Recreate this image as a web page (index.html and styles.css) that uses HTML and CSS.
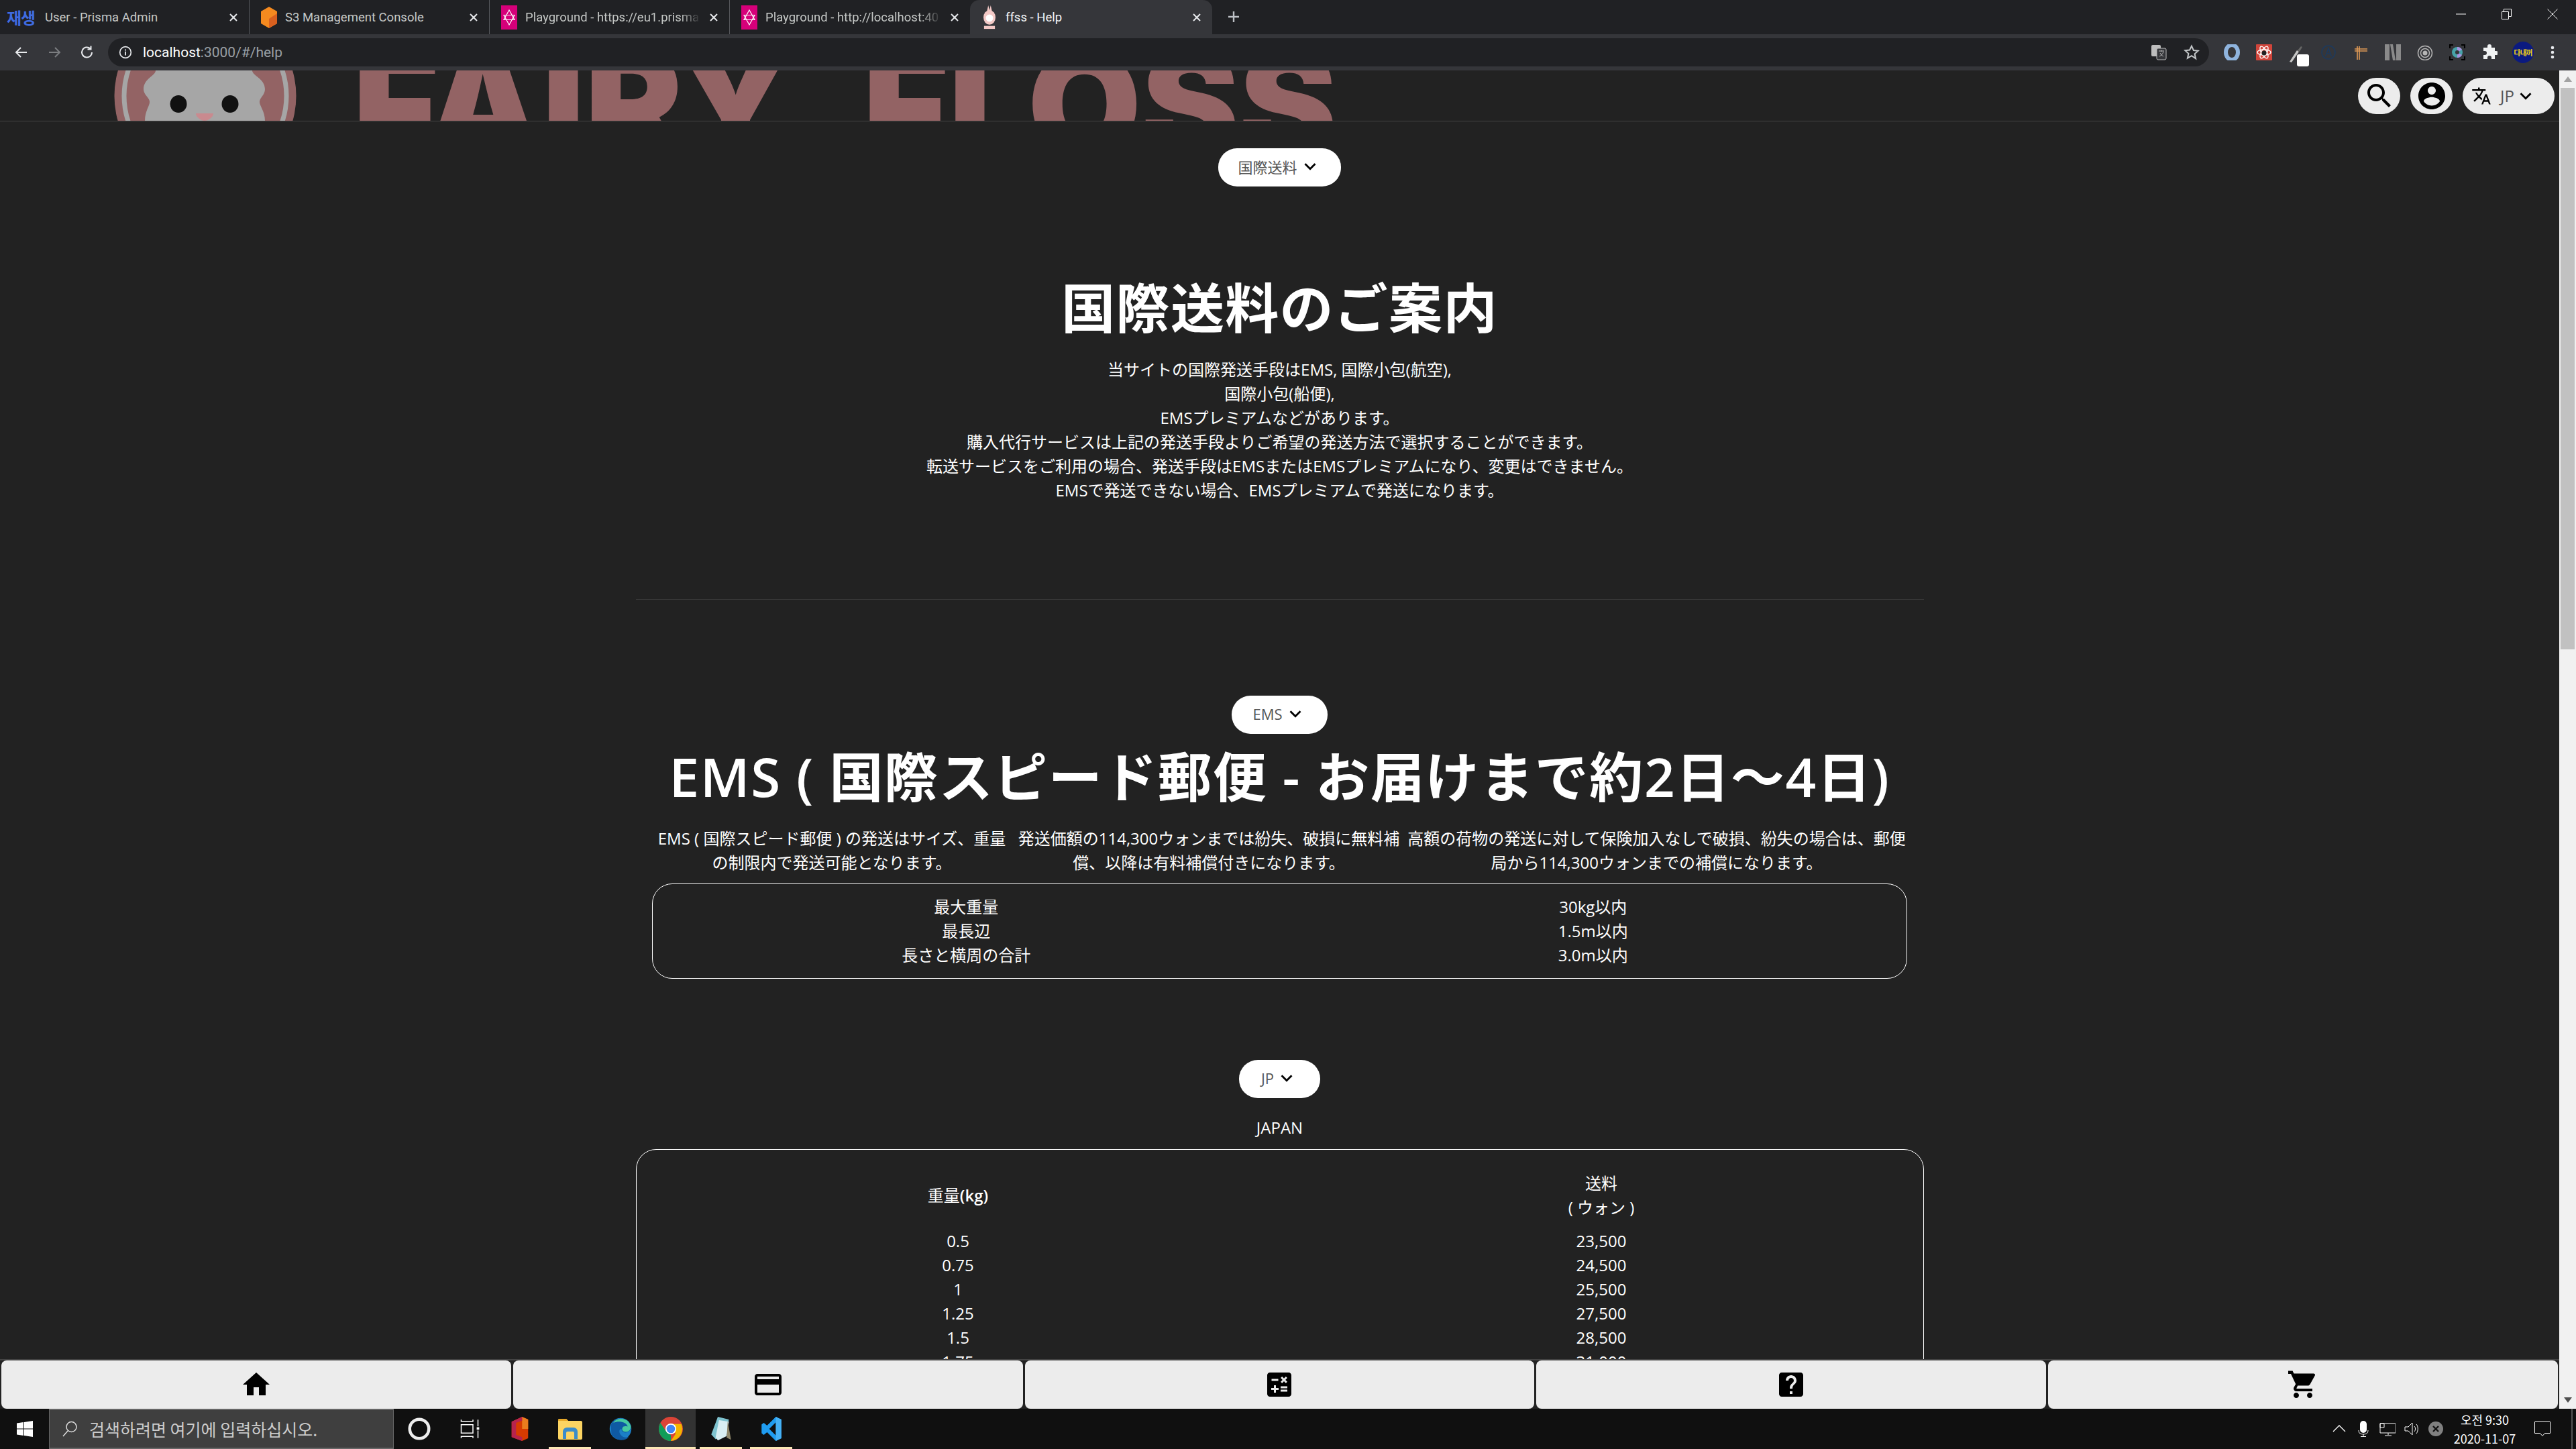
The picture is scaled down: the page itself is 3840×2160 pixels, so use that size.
FILE: index.html
```html
<!DOCTYPE html>
<html lang="ja">
<head>
    <meta charset="UTF-8">
    <title>ffss - Help</title>
    <link rel="stylesheet" href="styles.css">
</head>
<body>
    <svg class="sprites" width="0" height="0">
        <symbol id="chevron" viewBox="0 0 24 24"><path d="M16.59 8.59L12 13.17 7.41 8.59 6 10l6 6 6-6z"/></symbol>
        <symbol id="tab-close" viewBox="0 0 14 14"><path d="M2 2l10 10M12 2L2 12" stroke="#e8eaed" stroke-width="2" fill="none"/></symbol>
        <symbol id="graphql" viewBox="0 0 24 36"><rect width="24" height="36" fill="#d6007a"/><path d="M12 7l8 14.500H4zM12 29L4 14.500h16z" fill="none" stroke="#fff" stroke-width="1.200"/></symbol>
    </svg>

    <div class="tabstrip">
        <div class="tab">
            <span class="favicon-text">재생</span>
            <span class="tab-title">User - Prisma Admin</span>
            <svg class="tab-x"><use href="#tab-close"/></svg>
        </div>
        <div class="tab">
            <svg class="favicon" viewBox="0 0 24 32"><path d="M12 0l12 7v18l-12 7-12-7V7z" fill="#f58a1f"/><path d="M12 32l12-7V10l-12 8z" fill="#d9601f"/></svg>
            <span class="tab-title">S3 Management Console</span>
            <svg class="tab-x"><use href="#tab-close"/></svg>
        </div>
        <div class="tab">
            <svg class="favicon"><use href="#graphql"/></svg>
            <span class="tab-title tab-fade">Playground - https://eu1.prisma</span>
            <svg class="tab-x"><use href="#tab-close"/></svg>
        </div>
        <div class="tab tab-last">
            <svg class="favicon"><use href="#graphql"/></svg>
            <span class="tab-title tab-fade">Playground - http://localhost:40</span>
            <svg class="tab-x"><use href="#tab-close"/></svg>
        </div>
        <div class="tab tab-active">
            <svg class="favicon" viewBox="0 0 24 40"><ellipse cx="12" cy="20" rx="10" ry="12" fill="#f3c9c6"/><path d="M8 9l2-9 2 8 2-8 2 9z" fill="#f3c9c6"/><circle cx="12" cy="21" r="6" fill="#fff"/><rect x="3" y="34" width="18" height="5" fill="#f3c9c6"/></svg>
            <span class="tab-title">ffss - Help</span>
            <svg class="tab-x"><use href="#tab-close"/></svg>
        </div>
        <svg class="new-tab" viewBox="0 0 20 20"><path d="M10 2v16M2 10h16" stroke="#bdc1c6" stroke-width="2.400"/></svg>
        <div class="window-controls">
            <svg viewBox="0 0 16 16"><path d="M0 8h15" stroke="#fff"/></svg>
            <svg viewBox="0 0 16 16"><path d="M.5 4.500h10v11H.5zM3.500 4V.5h11v11H11" fill="none" stroke="#fff"/></svg>
            <svg viewBox="0 0 16 16"><path d="M.5.5l15 15M15.500.5l-15 15" stroke="#fff"/></svg>
        </div>
    </div>

    <div class="toolbar">
        <svg class="nav-arrow" viewBox="0 0 24 24"><path d="M20 12H5M11 5l-7 7 7 7" fill="none" stroke="#e8eaed" stroke-width="2"/></svg>
        <svg class="nav-arrow" viewBox="0 0 24 24"><path d="M4 12h15M13 5l7 7-7 7" fill="none" stroke="#7b7d80" stroke-width="2"/></svg>
        <svg class="nav-arrow" viewBox="0 0 24 24"><path d="M19 12a7.500 7.500 0 1 1-2.400-5.500M17.500 2.500v5h-5" fill="none" stroke="#e8eaed" stroke-width="2"/></svg>
        <div class="omnibox">
            <svg class="omni-info" viewBox="0 0 24 24"><circle cx="12" cy="12" r="10" fill="none" stroke="#e8eaed" stroke-width="2"/><path d="M12 10.500v7M12 6.500v2.400" stroke="#e8eaed" stroke-width="2.200"/></svg>
            <span class="url"><b>localhost</b>:3000/#/help</span>
            <svg class="omni-icon omni-translate" viewBox="0 0 24 24"><rect x="1" y="1" width="14" height="17" rx="2" fill="#bdbdbd"/><rect x="9" y="6" width="14" height="17" rx="2" fill="#35363a" stroke="#bdbdbd"/><path d="M12 10h8M16 9v2M19 11c-1 4-4 6-6 7M14 13c1 2 3 4 5 5" stroke="#bdbdbd" fill="none"/></svg>
            <svg class="omni-icon omni-star" viewBox="0 0 24 24"><path d="M12 2.600l2.900 6.400 6.900.7-5.200 4.600 1.500 6.900L12 17.200l-6.100 3.500 1.500-6.900-5.200-4.600 6.900-.7z" fill="none" stroke="#c4c7c9" stroke-width="2"/></svg>
        </div>
        <div class="extensions">
            <svg viewBox="0 0 24 24"><ellipse cx="12" cy="12" rx="9" ry="11" fill="none" stroke="#8fb4de" stroke-width="6"/></svg>
            <svg viewBox="0 0 24 24"><rect x="0" y="0" width="24" height="24" rx="1" fill="#d0453b"/><g fill="none" stroke="#fff" stroke-width="1.400"><ellipse cx="12" cy="12" rx="10" ry="4"/><ellipse cx="12" cy="12" rx="10" ry="4" transform="rotate(60 12 12)"/><ellipse cx="12" cy="12" rx="10" ry="4" transform="rotate(120 12 12)"/></g><circle cx="12" cy="13" r="3.500" fill="#222"/></svg>
            <div class="ext-knife">
                <svg viewBox="0 0 24 24"><path d="M2 23l3 1L16 8l-3-2z" fill="#c8c8c8"/><path d="M14 6l5-6 2 1-4 7z" fill="#666"/></svg>
                <span class="ext-badge"></span>
            </div>
            <svg viewBox="0 0 24 24"><circle cx="12" cy="12" r="10" fill="none" stroke="#1c3a5e" stroke-width="1.500"/><path d="M7.500 18L12 6l4.500 12M9 14h6" fill="none" stroke="#1c3a5e" stroke-width="1.500"/></svg>
            <svg viewBox="0 0 24 24"><path d="M7 3v20M10 3v20M3 7h19M3 10h19" stroke="#e09a55" stroke-width="1.600" fill="none"/></svg>
            <svg viewBox="0 0 24 24"><path d="M0 0h7v24H0zM8 0h4l4 24h-4zM17 0h7v24h-7z" fill="#8a8a8a"/></svg>
            <svg viewBox="0 0 24 24"><g fill="none" stroke="#b5b5b5" stroke-width="1.500"><circle cx="12" cy="13" r="10.500"/><circle cx="12" cy="13" r="6.500"/></g><circle cx="12" cy="13" r="3.500" fill="#b5b5b5"/></svg>
            <svg viewBox="0 0 24 24"><path d="M1 6V1h5M18 1h5v5M23 18v5h-5M6 23H1v-5" fill="none" stroke="#000" stroke-width="2"/><circle cx="12" cy="12" r="8" fill="#47a3a8"/><path d="M12 12V4a8 8 0 0 1 7 4zM12 12l7 4a8 8 0 0 1-7 4z" fill="#a794e0"/><circle cx="12" cy="12" r="3" fill="#35363a"/></svg>
            <svg viewBox="0 0 24 24"><path d="M9 3a3 3 0 0 1 6 0v2h5v5h2a3 3 0 0 1 0 6h-2v6h-5v-2a3 3 0 0 0-6 0v2H3v-6h2a3 3 0 0 0 0-6H3V5h6z" fill="#f1f3f4"/></svg>
            <div class="ext-avatar"><span>다내꺼</span></div>
            <svg class="ext-dots" viewBox="0 0 24 24"><circle cx="12" cy="5" r="2.300"/><circle cx="12" cy="12" r="2.300"/><circle cx="12" cy="19" r="2.300"/></svg>
        </div>
    </div>

    <div class="viewport">
        <div class="page">
            <header class="site-header">
                <div class="logo">
                    <svg class="logo-mark" viewBox="0 0 272 75">
                        <circle cx="136" cy="38" r="135.500" fill="#936364"/>
                        <circle cx="136" cy="38" r="121" fill="none" stroke="#a6a6a6" stroke-width="7"/>
                        <path d="M62 0C62 8 44 12 44 28C44 36 52 40 53 46C54 52 46 60 46 75H225C225 60 216 52 217 46C218 40 225 36 225 28C225 12 206 8 206 0Z" fill="#a6a6a6"/>
                        <ellipse cx="96" cy="50" rx="12.500" ry="13" fill="#111"/>
                        <ellipse cx="173" cy="50" rx="12.500" ry="13" fill="#111"/>
                        <path d="M122 64H148C148 70 140 75 135 75C130 75 122 70 122 64Z" fill="#c98a8f"/>
                    </svg>
                    <div class="logo-word"><span>FAIRY FLOSS</span></div>
                </div>
                <div class="header-actions">
                    <button class="pill pill-icon"><svg class="icon-48" viewBox="0 0 24 24"><path d="M15.500 14h-.79l-.28-.27C15.410 12.590 16 11.110 16 9.500 16 5.910 13.090 3 9.500 3S3 5.910 3 9.500 5.910 16 9.500 16c1.610 0 3.090-.59 4.230-1.570l.27.28v.79l5 4.990L20.490 19l-4.990-5zm-6 0C7.010 14 5 11.990 5 9.500S7.010 5 9.500 5 14 7.010 14 9.500 11.990 14 9.500 14z"/></svg></button>
                    <button class="pill pill-icon"><svg class="icon-48" viewBox="0 0 24 24"><path d="M12 2C6.480 2 2 6.480 2 12s4.480 10 10 10 10-4.480 10-10S17.520 2 12 2zm0 3c1.660 0 3 1.340 3 3s-1.340 3-3 3-3-1.340-3-3 1.340-3 3-3zm0 14.200c-2.500 0-4.710-1.280-6-3.220.03-1.990 4-3.080 6-3.080 1.990 0 5.970 1.090 6 3.080-1.290 1.940-3.500 3.220-6 3.220z"/></svg></button>
                    <button class="pill pill-lang">
                        <svg class="icon-translate" viewBox="0 0 24 24"><path d="M12.870 15.070l-2.540-2.510.03-.03c1.740-1.940 2.980-4.170 3.710-6.530H17V4h-7V2H8v2H1v1.990h11.170C11.500 7.920 10.440 9.750 9 11.350 8.070 10.320 7.300 9.190 6.690 8h-2c.73 1.630 1.730 3.170 2.980 4.560l-5.090 5.020L4 19l5-5 3.110 3.110.76-2.040zM18.500 10h-2L12 22h2l1.120-3h4.750L21 22h2l-4.500-12zm-2.620 7l1.620-4.330L19.120 17h-3.240z"/></svg>
                        <span>JP</span>
                        <svg class="icon-chevron"><use href="#chevron"/></svg>
                    </button>
                </div>
            </header>

            <main class="content">
                <button class="pill pill-select select-intl">国際送料 <svg class="icon-chevron"><use href="#chevron"/></svg></button>
                <h1 class="page-title">国際送料のご案内</h1>
                <p class="lead">
                    当サイトの国際発送手段はEMS, 国際小包(航空),<br>
                    国際小包(船便),<br>
                    EMSプレミアムなどがあります。<br>
                    購入代行サービスは上記の発送手段よりご希望の発送方法で選択することができます。<br>
                    転送サービスをご利用の場合、発送手段はEMSまたはEMSプレミアムになり、変更はできません。<br>
                    EMSで発送できない場合、EMSプレミアムで発送になります。
                </p>
                <hr class="divider">

                <button class="pill pill-select select-ems">EMS <svg class="icon-chevron"><use href="#chevron"/></svg></button>
                <h2 class="section-title">EMS ( 国際スピード郵便 - お届けまで約2日～4日)</h2>
                <div class="notes">
                    <p>EMS ( 国際スピード郵便 ) の発送はサイズ、重量<br>の制限内で発送可能となります。</p>
                    <p>発送価額の114,300ウォンまでは紛失、破損に無料補<br>償、以降は有料補償付きになります。</p>
                    <p>高額の荷物の発送に対して保険加入なしで破損、紛失の場合は、郵便<br>局から114,300ウォンまでの補償になります。</p>
                </div>
                <table class="box-table box-limits">
                    <tr><td>最大重量</td><td>30kg以内</td></tr>
                    <tr><td>最長辺</td><td>1.5m以内</td></tr>
                    <tr><td>長さと横周の合計</td><td>3.0m以内</td></tr>
                </table>

                <button class="pill pill-select select-country">JP <svg class="icon-chevron"><use href="#chevron"/></svg></button>
                <p class="country">JAPAN</p>
                <table class="box-table box-rates">
                    <tr><th>重量<b>(kg)</b></th><th>送料<br>( ウォン )</th></tr>
                    <tr><td>0.5</td><td>23,500</td></tr>
                    <tr><td>0.75</td><td>24,500</td></tr>
                    <tr><td>1</td><td>25,500</td></tr>
                    <tr><td>1.25</td><td>27,500</td></tr>
                    <tr><td>1.5</td><td>28,500</td></tr>
                    <tr><td>1.75</td><td>31,000</td></tr>
                    <tr><td>2</td><td>33,000</td></tr>
                </table>
            </main>

            <nav class="bottom-nav">
                <button><svg class="icon-48" viewBox="0 0 24 24"><path d="M10 20v-6h4v6h5v-8h3L12 3 2 12h3v8z"/></svg></button>
                <button><svg class="icon-48" viewBox="0 0 24 24"><path d="M20 4H4c-1.110 0-1.990.89-1.990 2L2 18c0 1.110.89 2 2 2h16c1.110 0 2-.89 2-2V6c0-1.110-.89-2-2-2zm0 14H4v-6h16v6zm0-10H4V6h16v2z"/></svg></button>
                <button><svg class="icon-48" viewBox="0 0 24 24"><path d="M19 3H5c-1.100 0-2 .9-2 2v14c0 1.100.9 2 2 2h14c1.100 0 2-.9 2-2V5c0-1.100-.9-2-2-2zm-5.970 4.060L14.090 6l1.410 1.410L16.910 6l1.060 1.060-1.410 1.410 1.410 1.410-1.060 1.060-1.410-1.400-1.410 1.410-1.060-1.060 1.410-1.410-1.410-1.420zm-6.780.66h5v1.500h-5v-1.500zM11.500 16h-2v2H8v-2H6v-1.500h2v-2h1.500v2h2V16zm6.500 1.250h-5v-1.500h5v1.500zm0-2.500h-5v-1.500h5v1.500z"/></svg></button>
                <button><svg class="icon-48" viewBox="0 0 24 24"><path d="M19 3H5c-1.110 0-2 .9-2 2v14c0 1.100.89 2 2 2h14c1.100 0 2-.9 2-2V5c0-1.100-.9-2-2-2zm-6 16h-2v-2h2v2zm2.070-7.750l-.9.92C13.450 12.900 13 13.500 13 15h-2v-.5c0-1.100.45-2.100 1.170-2.830l1.240-1.260c.37-.36.59-.86.59-1.410 0-1.100-.9-2-2-2s-2 .9-2 2H8c0-2.210 1.790-4 4-4s4 1.790 4 4c0 .88-.36 1.680-.93 2.250z"/></svg></button>
                <button><svg class="icon-48" viewBox="0 0 24 24"><path d="M7 18c-1.100 0-1.990.9-1.990 2S5.900 22 7 22s2-.9 2-2-.9-2-2-2zM1 2v2h2l3.600 7.590-1.350 2.450c-.16.28-.25.61-.25.96 0 1.100.9 2 2 2h12v-2H7.420c-.14 0-.25-.11-.25-.25l.03-.12.9-1.830h7.450c.75 0 1.410-.41 1.750-1.030l3.580-6.490c.08-.14.12-.31.12-.48 0-.55-.45-1-1-1H5.210l-.94-2H1zm16 16c-1.100 0-1.990.9-1.990 2s.89 2 1.990 2 2-.9 2-2-.9-2-2-2z"/></svg></button>
            </nav>
        </div>

        <div class="scrollbar">
            <div class="scroll-arrow"><svg viewBox="0 0 12 8"><path d="M6 0l6 8H0z" fill="#a3a3a3"/></svg></div>
            <div class="scroll-thumb"></div>
            <div class="scroll-track"></div>
            <div class="scroll-arrow"><svg viewBox="0 0 12 8"><path d="M0 0h12L6 8z" fill="#505050"/></svg></div>
        </div>
    </div>

    <footer class="taskbar">
        <div class="start"><svg viewBox="0 0 24 24"><path d="M0 3.500l10-1.400v9.400H0zM11 2l13-2v11.500H11zM0 12.500h10v9.400L0 20.500zM11 12.500h13V24l-13-2z" fill="#fff"/></svg></div>
        <div class="task-search">
            <svg viewBox="0 0 24 24"><circle cx="14.500" cy="9" r="7.500" fill="none" stroke="#ddd" stroke-width="1.500"/><path d="M9 15L2 23" stroke="#ddd" stroke-width="1.500"/></svg>
            <span>검색하려면 여기에 입력하십시오.</span>
        </div>
        <div class="task-app"><svg viewBox="0 0 24 24"><circle cx="12" cy="12" r="9.500" fill="none" stroke="#eee" stroke-width="3"/></svg></div>
        <div class="task-app task-view"><svg viewBox="0 0 24 24"><path d="M2 1v2h14V1M2 23v-2h14v2M2 7h14v10H2zM22 1v8M22 14v9" fill="none" stroke="#fff" stroke-width="1.200"/><rect x="20.500" y="10" width="3" height="3" fill="#fff"/></svg></div>
        <div class="task-app"><svg viewBox="0 0 36 44"><path d="M3 9L22 0l11 5v34l-11 5-19-7z" fill="#d83b01"/><path d="M22 0l11 5v17H22z" fill="#eb7d1e"/><path d="M3 9L22 0v7L11 11v22l11 4v7L3 37z" fill="#b7234d"/></svg></div>
        <div class="task-app running"><svg viewBox="0 0 36 32"><path d="M0 3a2 2 0 0 1 2-2h10l3 3h19a2 2 0 0 1 2 2v24a2 2 0 0 1-2 2H2a2 2 0 0 1-2-2z" fill="#fcd462"/><path d="M0 3a2 2 0 0 1 2-2h10l3 3H0z" fill="#e8a929"/><path d="M7 31V20a6 6 0 0 1 6-6h10a6 6 0 0 1 6 6v11h-5v-9a2 2 0 0 0-2-2h-8a2 2 0 0 0-2 2v9z" fill="#3b8cc9"/></svg></div>
        <div class="task-app"><svg viewBox="0 0 36 40"><circle cx="18" cy="20" r="18" fill="#1b7fc8"/><path d="M2 14C6 0 30-2 35 14c2 7-3 12-9 12-5 0-7-3-6-6-6 0-5 9 2 13 4 2 8 1 10 0-6 8-22 8-29-4z" fill="#0f5aa3"/><path d="M6 10C12 0 30 0 35 15c1 5-3 10-8 10-5 0-7-3-6-6 1-5 8-3 9-3-3-8-15-10-24-6z" fill="#46c9a0"/></svg></div>
        <div class="task-app active running"><svg viewBox="0 0 40 40"><circle cx="20" cy="20" r="20" fill="#db4437"/><path d="M20 40A20 20 0 0 1 2.700 10L12 24l8 6z" fill="#0f9d58"/><path d="M20 12h17.400A20 20 0 0 1 20 40l8-12z" fill="#f4b400"/><circle cx="20" cy="20" r="9" fill="#fff"/><circle cx="20" cy="20" r="7" fill="#4285f4"/></svg></div>
        <div class="task-app running"><svg viewBox="0 0 36 44"><path d="M12 0l20 5-4 26-20 10L0 32z" fill="#7fc3cf"/><path d="M14 6l18 3-4 26-16 8-4-6z" fill="#d9eef2"/><path d="M30 8l6 34-8-4z" fill="#8d8568"/></svg></div>
        <div class="task-app running"><svg viewBox="0 0 36 44"><path d="M26 0l10 5v34l-10 5L10 28l-6 5-4-3v-16l4-3 6 5z" fill="#1f9cf0"/><path d="M26 10L14 22l12 12z" fill="#101010"/><path d="M26 0l10 5v34l-10 5z" fill="#45b1f5"/></svg></div>
        <div class="tray">
            <svg class="tray-icon" viewBox="0 0 24 24"><path d="M3 16l9-9 9 9" fill="none" stroke="#fff" stroke-width="1.300"/></svg>
            <svg class="tray-icon" viewBox="0 0 24 24"><rect x="7" y="0" width="10" height="18" rx="5" fill="#fff"/><path d="M5 14c0 5 3 6 7 6s7-1 7-6M12 20v3M8 23.500h8" fill="none" stroke="#fff"/></svg>
            <svg class="tray-icon" viewBox="0 0 24 24"><path d="M1 4h23v14H1zM1 4h6v6H1zM13 18v3M8 22h10" fill="none" stroke="#fff"/></svg>
            <svg class="tray-icon" viewBox="0 0 24 24"><path d="M2 9h5l6-6v18l-6-6H2zM16 8c2 2 2 6 0 8M19 5c3 4 3 10 0 14" fill="none" stroke="#fff"/></svg>
            <svg class="tray-icon" viewBox="0 0 24 24"><circle cx="12" cy="12" r="11" fill="#808080"/><path d="M8 8l8 8M16 8l-8 8" stroke="#111" stroke-width="2.400"/></svg>
            <div class="clock"><span>오전 9:30</span><span>2020-11-07</span></div>
            <svg class="tray-notify" viewBox="0 0 24 24"><path d="M.5 1.500h23v17h-8l-3.500 4-3.500-4h-8z" fill="none" stroke="#fff"/></svg>
            <span class="show-desktop"></span>
        </div>
    </footer>
</body>
</html>
```

FILE: styles.css
```css
* {
    box-sizing: border-box;
}

html, body {
    height: 100%;
}

body {
    margin: 0;
    display: flex;
    flex-direction: column;
    overflow: hidden;
    background-color: #222;
    color: #fff;
    font-family: "Open Sans", "Noto Sans CJK JP", sans-serif;
    font-size: 24px;
    line-height: 36px;
}

button {
    font-family: inherit;
    border: none;
    padding: 0;
}

.sprites {
    position: absolute;
}

/* browser chrome */
.tabstrip {
    flex: none;
    display: flex;
    align-items: flex-start;
    height: 51px;
    padding-left: 14px;
    background-color: #202124;
}

.tab {
    display: flex;
    align-items: center;
    flex: none;
    width: 358px;
    height: 51px;
    padding: 0 16px 0 17px;
    gap: 12px;
    border-right: 1px solid #55575b;
    font-family: "Roboto", "Open Sans", sans-serif;
    font-size: 18.5px;
    color: #c4c7c5;
}

.tab-last {
    border-right: none;
}

.tab-active {
    width: 361px;
    height: 54px;
    margin-top: 0;
    padding-bottom: 3px;
    border-right: none;
    border-radius: 14px 14px 0 0;
    background-color: #35363a;
    color: #f1f3f4;
}

.favicon {
    flex: none;
    width: 24px;
    height: 36px;
}

.favicon-text {
    flex: none;
    width: 24px;
    margin-left: -21px;
    margin-right: 21px;
    font-family: "Noto Sans CJK KR", sans-serif;
    font-size: 24px;
    font-weight: 700;
    letter-spacing: -1px;
    color: #3f6be0;
    white-space: nowrap;
}

.tab-title {
    flex: 1;
    overflow: hidden;
    white-space: nowrap;
}

.tab-fade {
    -webkit-mask-image: linear-gradient(to right, #000 88%, transparent);
    mask-image: linear-gradient(to right, #000 88%, transparent);
}

.tab-x {
    flex: none;
    width: 14px;
    height: 14px;
}

.new-tab {
    flex: none;
    width: 20px;
    height: 20px;
    margin: 15px 0 0 22px;
}

.window-controls {
    display: flex;
    gap: 52px;
    margin: 13px 27px 0 auto;
}

.window-controls svg {
    width: 16px;
    height: 16px;
}

.toolbar {
    flex: none;
    display: flex;
    align-items: center;
    height: 54px;
    padding: 0 21px 0 20px;
    background-color: #35363a;
}

.nav-arrow {
    flex: none;
    width: 24px;
    height: 24px;
    margin-right: 25px;
}

.omnibox {
    display: flex;
    align-items: center;
    flex: none;
    width: 3132px;
    height: 42px;
    margin-left: -6px;
    padding: 0 14px 0 16px;
    border-radius: 21px;
    background-color: #202124;
}

.omni-info {
    width: 20px;
    height: 20px;
}

.url {
    margin-left: 16px;
    font-family: "Roboto", "Open Sans", sans-serif;
    font-size: 21px;
    color: #9aa0a6;
}

.url b {
    font-weight: 400;
    color: #fff;
}

.omni-icon {
    width: 24px;
    height: 24px;
}

.omni-translate {
    margin-left: auto;
}

.omni-star {
    margin-left: 25px;
}

.extensions {
    display: flex;
    align-items: center;
    gap: 24px;
    margin-left: 22px;
}

.extensions > svg {
    flex: none;
    width: 24px;
    height: 24px;
}

.ext-knife {
    position: relative;
    flex: none;
    width: 24px;
    height: 24px;
}

.ext-knife svg {
    width: 24px;
    height: 24px;
}

.ext-badge {
    position: absolute;
    left: 13px;
    top: 15px;
    width: 18px;
    height: 18px;
    border-radius: 3px;
    background-color: #fff;
}

.ext-avatar {
    flex: none;
    display: flex;
    align-items: center;
    justify-content: center;
    width: 32px;
    height: 32px;
    margin-left: -2px;
    border-radius: 50%;
    background-color: #0b1a80;
    font-family: "Noto Sans CJK KR", sans-serif;
    font-size: 11px;
    font-weight: 700;
    letter-spacing: -1px;
    color: #f7d417;
}

.extensions > .ext-dots {
    fill: #e8eaed;
    margin-left: -8px;
}

/* page */
.viewport {
    flex: 1;
    min-height: 0;
    display: flex;
}

.page {
    flex: 1;
    min-width: 0;
    display: flex;
    flex-direction: column;
}

.site-header {
    flex: none;
    display: flex;
    align-items: center;
    height: 76px;
    padding: 0 7px 0 170px;
    border-bottom: 1px solid #444;
}

.logo {
    display: flex;
    height: 75px;
    overflow: hidden;
}

.logo-mark {
    flex: none;
    width: 272px;
    height: 75px;
}

.logo-word {
    margin-left: 84px;
    height: 75px;
    overflow: hidden;
}

.logo-word span {
    display: block;
    margin-top: -60px;
    font-family: "Inter", sans-serif;
    font-size: 219px;
    font-weight: 900;
    line-height: 219px;
    word-spacing: 62px;
    color: #936364;
    white-space: nowrap;
}

.header-actions {
    display: flex;
    gap: 15px;
    margin-left: auto;
}

.pill {
    display: inline-flex;
    align-items: center;
    justify-content: center;
    background-color: #ececec;
    color: #555;
    font-size: 22px;
}

.pill-icon {
    width: 63px;
    height: 54px;
    border-radius: 27px;
}

.icon-48 {
    width: 48px;
    height: 48px;
}

.pill-lang {
    justify-content: flex-start;
    width: 137px;
    height: 54px;
    gap: 13px;
    padding-left: 13px;
    border-radius: 27px;
    font-size: 24px;
}

.icon-translate {
    width: 30px;
    height: 30px;
}

.icon-chevron {
    width: 34px;
    height: 34px;
    margin-left: -4px;
}

.pill-lang .icon-chevron {
    margin-left: -13px;
}

.content {
    flex: 1;
    min-height: 0;
    overflow: hidden;
    display: flex;
    flex-direction: column;
    align-items: center;
    text-align: center;
}

.pill-select {
    flex: none;
    height: 57px;
    gap: 6px;
    padding-bottom: 4px;
    border-radius: 28px;
    background-color: #fff;
}

.select-intl {
    width: 183px;
    margin-top: 40px;
}

.select-ems {
    width: 143px;
    margin-top: 143px;
}

.select-country {
    width: 121px;
    margin-top: 121px;
}

.page-title {
    margin: 132px 0 27px;
    font-size: 80px;
    font-weight: 600;
    line-height: 96px;
    letter-spacing: 1.3px;
}

.lead {
    margin: 0;
}

.divider {
    flex: none;
    width: 1920px;
    margin: 144px 0 0;
    border: none;
    border-top: 1px solid #3a3a3a;
}

.section-title {
    margin: 15px 0 27px;
    font-size: 80px;
    font-weight: 600;
    line-height: 96px;
    letter-spacing: 1.6px;
    white-space: nowrap;
}

.notes {
    flex: none;
    display: grid;
    grid-template-columns: 536px 588px 747px;
    width: 1871px;
}

.notes p {
    margin: 0;
    white-space: nowrap;
}

.box-table {
    flex: none;
    table-layout: fixed;
    border-collapse: separate;
    border-spacing: 0;
    border: 1px solid #fff;
    border-radius: 30px;
}

.box-table td, .box-table th {
    padding: 0;
    font-weight: 400;
}

.box-table th b {
    font-weight: 600;
}

.box-limits {
    width: 1871px;
    margin-top: 13px;
    padding: 16px 0;
}

.country {
    margin: 26px 0 14px;
}

.box-rates {
    width: 1920px;
    padding: 16px 0;
}

.box-rates th {
    padding: 16px 0 14px;
}

.bottom-nav {
    flex: none;
    display: grid;
    grid-template-columns: repeat(5, 1fr);
    gap: 3px;
    height: 74px;
    padding: 0 2px;
    border-top: 2px solid #444;
    background-color: #222;
}

.bottom-nav button {
    display: flex;
    align-items: center;
    justify-content: center;
    background-color: #ececec;
    border-radius: 8px;
}

.scrollbar {
    flex: none;
    display: flex;
    flex-direction: column;
    width: 25px;
    background-color: #f1f1f1;
}

.scroll-arrow {
    flex: none;
    display: flex;
    align-items: center;
    justify-content: center;
    height: 26px;
}

.scroll-arrow svg {
    width: 12px;
    height: 8px;
}

.scroll-thumb {
    flex: none;
    height: 837px;
    margin: 0 2px;
    background-color: #c1c1c1;
}

.scroll-track {
    flex: 1;
}

/* windows taskbar */
.taskbar {
    flex: none;
    display: flex;
    height: 60px;
    background-color: #101010;
}

.start {
    flex: none;
    display: flex;
    align-items: center;
    justify-content: center;
    width: 73px;
}

.start svg {
    width: 24px;
    height: 24px;
}

.task-search {
    flex: none;
    display: flex;
    align-items: center;
    gap: 17px;
    width: 514px;
    padding-left: 18px;
    background-color: #3f3f3f;
    border: 1px solid #666;
    border-top-width: 2px;
    border-bottom-width: 2px;
    font-family: "Noto Sans CJK KR", sans-serif;
    font-size: 25px;
    color: #ccc;
}

.task-search svg {
    width: 24px;
    height: 28px;
}

.task-app {
    position: relative;
    flex: none;
    display: flex;
    align-items: center;
    justify-content: center;
    width: 75px;
}

.task-app svg {
    width: 36px;
    height: 36px;
}

.task-app.task-view svg {
    width: 30px;
    height: 30px;
}

.task-app.active {
    background-color: #333;
}

.task-app.running::after {
    content: "";
    position: absolute;
    left: 6px;
    right: 6px;
    bottom: 0;
    height: 3px;
    background-color: #fbe6b4;
}

.task-app.active.running::after {
    left: 0;
    right: 0;
}

.tray {
    display: flex;
    align-items: center;
    margin-left: auto;
    font-family: "Noto Sans CJK KR", "Noto Sans", sans-serif;
    color: #fff;
}

.tray-icon {
    width: 24px;
    height: 24px;
    margin-right: 12px;
}

.clock {
    display: flex;
    flex-direction: column;
    align-items: center;
    width: 108px;
    margin-left: -5px;
    font-size: 18px;
    line-height: 28px;
}

.tray-notify {
    width: 24px;
    height: 24px;
    margin: 0 31px 0 20px;
}

.show-desktop {
    width: 2px;
    height: 60px;
    background-color: #555;
    margin-right: 5px;
}
```
